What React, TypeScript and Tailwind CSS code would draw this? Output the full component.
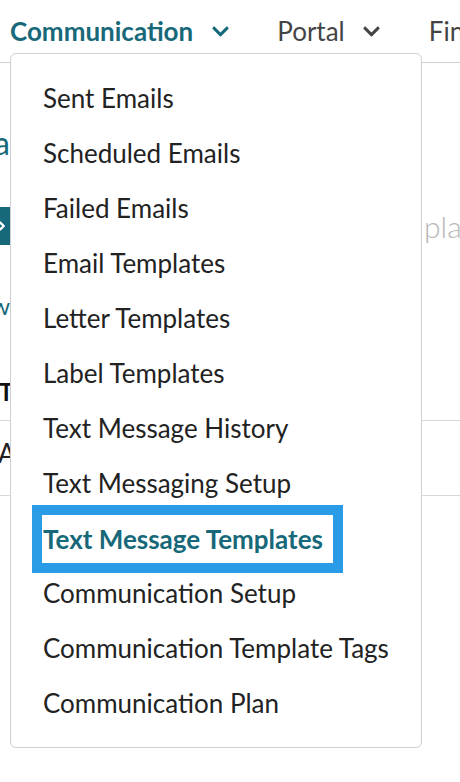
import { ChevronRight } from "lucide-react";

const menuItems = [
  "Sent Emails",
  "Scheduled Emails",
  "Failed Emails",
  "Email Templates",
  "Letter Templates",
  "Label Templates",
  "Text Message History",
  "Text Messaging Setup",
  "Text Message Templates",
  "Communication Setup",
  "Communication Template Tags",
  "Communication Plan",
];

const active = "Text Message Templates";

function Chevron({ className }: { className?: string }) {
  return (
    <svg viewBox="0 0 448 512" className={className} fill="currentColor">
      <path d="M207.029 381.476L12.686 187.132c-9.373-9.373-9.373-24.569 0-33.941l22.667-22.667c9.357-9.357 24.522-9.375 33.901-.04L224 284.505l154.745-154.021c9.379-9.335 24.544-9.317 33.901.04l22.667 22.667c9.373 9.373 9.373 24.569 0 33.941L240.971 381.476c-9.373 9.372-24.569 9.372-33.942 0z" />
    </svg>
  );
}

export default function App() {
  return (
    <div
      className="relative w-[460px] h-[782px] overflow-hidden bg-white"
      style={{ fontFamily: "Lato, 'Open Sans', sans-serif" }}
    >
      {/* top nav */}
      <nav className="h-[63px] border-b border-[#d0d0d0] flex items-start pt-[13px] pl-[10px] whitespace-nowrap">
        <div className="flex items-center text-[#17697a] font-bold text-[26px] leading-[36px]">
          Communication
          <Chevron className="w-[19px] h-[19px] ml-[18px] mt-[1px]" />
        </div>
        <div className="flex items-center text-[#444] text-[26px] leading-[36px] ml-[47px]">
          Portal
          <Chevron className="w-[19px] h-[19px] ml-[17px] mt-[1px]" />
        </div>
        <div className="text-[#444] text-[26px] leading-[36px] ml-[48px]">Finance</div>
      </nav>

      {/* page content behind the menu */}
      <main className="flex flex-col">
        <div className="flex mt-[60px] h-[40px]">
          <div className="w-[10px] overflow-hidden flex justify-end whitespace-nowrap text-[32px] leading-[40px] text-[#17697a]">
            Templa
          </div>
        </div>
        <div className="flex items-center mt-[43px] h-[40px]">
          <div className="w-[10px] overflow-hidden flex justify-end">
            <div className="shrink-0 w-[40px] h-[38px] bg-[#17697a] flex items-center justify-end pr-[1px] text-white">
              <ChevronRight className="w-[14px] h-[14px]" strokeWidth={4} />
            </div>
          </div>
          <div className="ml-auto w-[38px] overflow-hidden whitespace-nowrap flex justify-start">
            <span className="shrink-0 ml-[2px] text-[30px] font-light text-[#b8b8b8]">plates</span>
          </div>
        </div>
        <div className="flex mt-[40px] h-[40px]">
          <div className="w-[10px] overflow-hidden flex justify-end whitespace-nowrap text-[24px] leading-[40px] text-[#17697a]">
            View
          </div>
        </div>
        <div className="flex mt-[35px] h-[59px] items-start pt-[15px]">
          <div className="whitespace-nowrap text-[24px] leading-[32px] font-bold text-[#111] -ml-[1px]">To</div>
        </div>
        <div className="h-[76px] border-t border-b border-[#d8d8d8] flex items-start pt-[12px]">
          <span className="text-[26px] leading-[40px] text-[#222] -ml-[2px]">A</span>
        </div>
      </main>

      {/* dropdown menu */}
      <div className="absolute left-[10px] top-[53px] w-[412px] h-[695px] rounded-[6px] border-[1.5px] border-[#cfcfcf] bg-white pt-[17px]">
        <ul>
          {menuItems.map((item) => (
            <li key={item} className="h-[55px] flex items-center pl-[32px] whitespace-nowrap">
              {item === active ? (
                <span className="inline-block pl-[1px] pr-[10px] h-[48px] leading-[48px] text-[26px] font-bold text-[#17697a] outline-[10px] outline-solid outline-[#2a9be6] -ml-[1px]">
                  {item}
                </span>
              ) : (
                <span className="text-[26px] text-[#222]">{item}</span>
              )}
            </li>
          ))}
        </ul>
      </div>
    </div>
  );
}
